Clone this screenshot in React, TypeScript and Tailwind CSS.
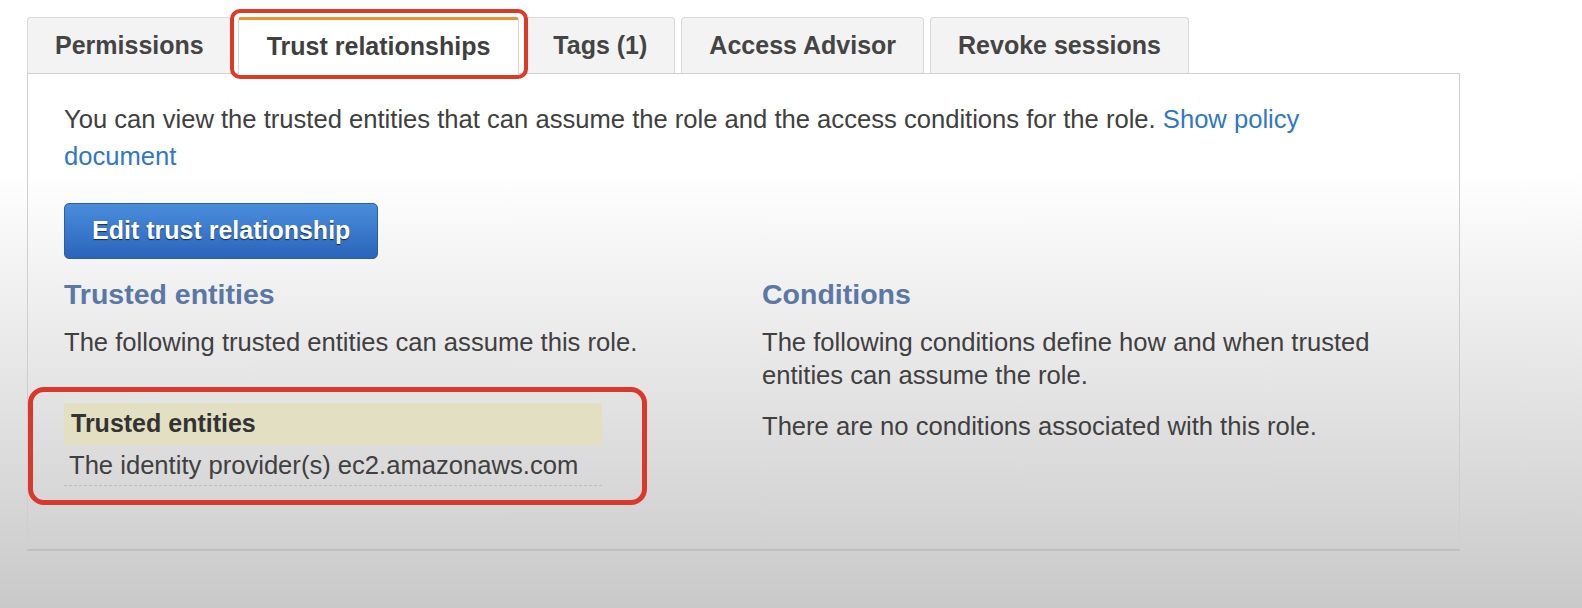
import React from 'react';

const tabs = [
  { label: 'Permissions', active: false },
  { label: 'Trust relationships', active: true },
  { label: 'Tags (1)', active: false },
  { label: 'Access Advisor', active: false },
  { label: 'Revoke sessions', active: false },
];

function Tab({ label, active }: { label: string; active: boolean }) {
  if (active) {
    return (
      <div className="relative">
        <div className="relative z-10 -mb-px flex h-[57px] items-center rounded-t-[3px] border-x border-t-[3px] border-x-[#d6d6d6] border-t-[#e9922f] bg-white px-[28px] text-[25px] font-bold text-[#3f3f3f]">
          {label}
        </div>
        {/* annotation */}
        <span className="pointer-events-none absolute -top-[8px] -bottom-[6px] -left-[8px] -right-[9px] z-20 rounded-[10px] border-[4px] border-[#dc3a27]" />
      </div>
    );
  }
  return (
    <div className="flex h-[56px] items-center rounded-t-[4px] border-x border-t border-[#d9d9d9] bg-[#f3f3f3] px-[27px] text-[25px] font-bold text-[#444]">
      {label}
    </div>
  );
}

export default function App() {
  return (
    <main className="min-h-screen w-full bg-[linear-gradient(to_bottom,#ffffff_0%,#ffffff_28%,#c9c9c9_100%)] pl-[27px] pt-[17px] font-['Liberation_Sans',Arial,sans-serif] text-[#404040]">
      <div className="w-[1433px]">
        <div className="flex items-end gap-[6px]">
          {tabs.map((t) => (
            <Tab key={t.label} label={t.label} active={t.active} />
          ))}
        </div>

        <section className="h-[477px] border border-[#cfcfcf] border-b-[#bcbcbc] px-[36px] pt-[27px] shadow-[0_1px_0_rgba(0,0,0,0.06)]">
          <p className="w-[1300px] text-[25.6px] leading-[37px]">
            You can view the trusted entities that can assume the role and the access conditions for the role.{' '}
            <a className="text-[#2f78c5]">Show policy document</a>
          </p>

          <button className="mt-[28px] h-[56px] rounded-[5px] border border-[#2a5ea8] bg-[linear-gradient(to_bottom,#4a8ddc,#2b64ba)] px-[27px] text-[25px] font-bold text-white [text-shadow:0_1px_1px_rgba(0,0,0,0.65)]">
            Edit trust relationship
          </button>

          <div className="mt-[18px] grid grid-cols-[698px_1fr]">
            <div>
              <h2 className="text-[28.5px] font-bold leading-[34px] text-[#5a77a6]">Trusted entities</h2>
              <p className="mt-[15px] text-[25.6px] leading-[33px]">
                The following trusted entities can assume this role.
              </p>

              <div className="relative mt-[44px] w-[538px]">
                <div className="flex h-[42px] items-center bg-[#e2dfc3] px-[7px] text-[25px] font-bold text-[#333]">
                  Trusted entities
                </div>
                <div className="flex h-[41px] items-center border-b border-dashed border-[#bdbdbd] px-[5px] text-[25.6px]">
                  The identity provider(s) ec2.amazonaws.com
                </div>
                {/* annotation */}
                <span className="pointer-events-none absolute -top-[16px] -bottom-[19px] -left-[36px] -right-[45px] rounded-[16px] border-[5px] border-[#d8392a]" />
              </div>
            </div>

            <div>
              <h2 className="text-[28.5px] font-bold leading-[34px] text-[#5a77a6]">Conditions</h2>
              <p className="mt-[15px] w-[630px] text-[25.6px] leading-[33px]">
                The following conditions define how and when trusted entities can assume the role.
              </p>
              <p className="mt-[18px] text-[25.6px] leading-[33px]">
                There are no conditions associated with this role.
              </p>
            </div>
          </div>
        </section>
      </div>
    </main>
  );
}
